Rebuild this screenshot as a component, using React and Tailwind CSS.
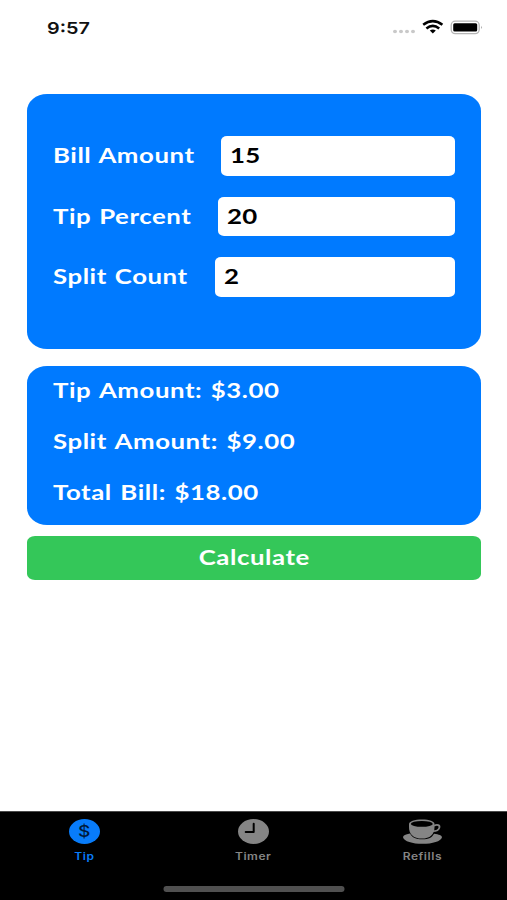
import React, { useState } from 'react';
import { clsx } from 'clsx';

const fields = [
  { key: 'bill', label: 'Bill Amount', labelClass: 'w-[168px]' },
  { key: 'tip', label: 'Tip Percent', labelClass: 'w-[165px]' },
  { key: 'split', label: 'Split Count', labelClass: 'w-[162px]' },
];

function StatusBar() {
  return (
    <header className="flex h-[94px] shrink-0 items-start justify-between pl-[47px] pr-[24px] pt-[17px]">
      <span className="mt-px origin-left scale-x-[1.2] font-['Inter'] text-[16.5px] font-semibold leading-[21px] text-[#111]">
        9:57
      </span>
      <svg width="91" height="20" viewBox="0 0 91 20" className="mt-px">
        <g fill="#c9c9c9">
          <ellipse cx="3" cy="13.5" rx="2" ry="1.7" />
          <ellipse cx="9" cy="13.5" rx="2" ry="1.7" />
          <ellipse cx="15" cy="13.5" rx="2" ry="1.7" />
          <ellipse cx="21" cy="13.5" rx="2" ry="1.7" />
        </g>
        <g fill="none" stroke="#000" strokeWidth="2.6">
          <path d="M31.2 6.8Q40.8 -0.4 50.4 6.8" />
          <path d="M34.4 10.4Q40.8 5.4 47.2 10.4" />
        </g>
        <path d="M37.8 12.6Q40.8 10.2 43.8 12.6L40.8 15.4Z" fill="#000" />
        <rect x="59.2" y="3.2" width="28" height="12.4" rx="4" fill="#fff" stroke="#b5b5b5" strokeWidth="1.3" />
        <rect x="61.2" y="5.2" width="24" height="8.4" rx="1.5" fill="#000" />
        <path d="M89.2 7.7Q91 9.4 89.2 11.1Z" fill="#999" />
      </svg>
    </header>
  );
}

function ResultLine({ label, value }) {
  return (
    <p className="h-[51.4px] origin-left scale-x-[1.2] whitespace-nowrap text-[21.5px] font-bold leading-[26px] tracking-[0.45px] [word-spacing:1.5px]">
      {label}: ${value.toFixed(2)}
    </p>
  );
}

function TipIcon() {
  return (
    <span className="flex h-[25px] w-[31px] items-center justify-center rounded-[50%] bg-[#087cfa]">
      <span className="scale-x-[1.2] font-['Inter'] text-[16px] font-medium leading-[25px] text-[#001a3a]">$</span>
    </span>
  );
}

function TimerIcon() {
  return (
    <svg width="31" height="25" viewBox="0 0 31 25">
      <ellipse cx="15.5" cy="12.5" rx="15.5" ry="12.5" fill="#858585" />
      <path d="M15.7 4.8V13H7.7" fill="none" stroke="#000" strokeWidth="2" strokeLinecap="round" strokeLinejoin="round" />
    </svg>
  );
}

function CupIcon() {
  return (
    <svg width="39" height="25" viewBox="0 0 39 25">
      <g fill="#858585">
        <path d="M7 14.6C2.5 15.3 0 16.6 0 18.2C1 22.3 9.5 24.8 19.5 24.8S38 22.3 39 18.2C39 16.6 36 15.2 31 14.7C29 18.6 26 20.3 19.3 20.3S9.5 18.8 7 14.6Z" />
        <path d="M6 5C6 2.3 11.5 0.5 19 0.5S31.5 2.3 31.5 5V8C31.5 15.5 27 19.6 18.8 19.6S6 15.5 6 8Z" />
      </g>
      <ellipse cx="18.8" cy="4.9" rx="11" ry="2.9" fill="#000" />
      <path d="M31 6.7C34.5 5.1 37 6.2 36.4 8.6C35.8 11 32.5 12.2 29.7 12.2" fill="none" stroke="#858585" strokeWidth="1.8" />
    </svg>
  );
}

const tabs = [
  { name: 'Tip', Icon: TipIcon },
  { name: 'Timer', Icon: TimerIcon },
  { name: 'Refills', Icon: CupIcon },
];

function TabBar() {
  const [active, setActive] = useState('Tip');

  return (
    <footer className="flex h-[89px] shrink-0 flex-col items-center border-t border-[#4a4a4a] bg-black">
      <nav className="grid w-full grid-cols-3 pt-[7px]">
        {tabs.map(({ name, Icon }) => (
          <button
            key={name}
            onClick={() => setActive(name)}
            className={clsx(
              'flex flex-col items-center',
              active === name ? 'text-[#087cfa]' : 'text-[#858585]'
            )}
          >
            <Icon />
            <span className="mt-[5px] scale-x-[1.2] font-['Inter'] text-[10px] font-semibold leading-[14px] tracking-[0.45px]">
              {name}
            </span>
          </button>
        ))}
      </nav>
      <div className="mt-[23px] h-[6px] w-[181px] translate-x-[0.5px] rounded-full bg-[#505050]" />
    </footer>
  );
}

export default function App() {
  const [values, setValues] = useState({ bill: '15', tip: '20', split: '2' });
  const [result, setResult] = useState({ tip: 3, split: 9, total: 18 });

  const calculate = () => {
    const bill = Number(values.bill) || 0;
    const tip = (bill * (Number(values.tip) || 0)) / 100;
    const total = bill + tip;
    setResult({ tip, split: total / (Number(values.split) || 1), total });
  };

  return (
    <div className="flex h-[900px] w-[507px] flex-col overflow-hidden bg-white font-['Lato',sans-serif]">
      <StatusBar />

      <main className="flex flex-1 flex-col pl-[27px] pr-[26px] text-white">
        <section className="flex h-[255px] flex-col gap-[21px] rounded-[20px/17px] bg-[#007aff] px-[26px] pt-[42px]">
          {fields.map(({ key, label, labelClass }) => (
            <label key={key} className="flex h-[39.7px] items-center">
              <span className={clsx('shrink-0 pb-[2px]', labelClass)}>
                <span className="block origin-left scale-x-[1.2] whitespace-nowrap text-[21.5px] font-bold leading-[26px] tracking-[0.45px] [word-spacing:1px]">
                  {label}
                </span>
              </span>
              <span className="h-full min-w-0 flex-1 rounded-[6px/5px] bg-white pl-[9px]">
                <input
                  value={values[key]}
                  onChange={(e) => setValues({ ...values, [key]: e.target.value })}
                  className="h-full w-[180px] origin-left scale-x-[1.2] bg-transparent pb-[2px] text-[21.5px] font-bold tracking-[0.2px] text-black outline-none"
                />
              </span>
            </label>
          ))}
        </section>

        <section className="mt-[16.5px] h-[159px] rounded-[20px/17px] bg-[#007aff] pl-[26px] pt-[11px]">
          <ResultLine label="Tip Amount" value={result.tip} />
          <ResultLine label="Split Amount" value={result.split} />
          <ResultLine label="Total Bill" value={result.total} />
        </section>

        <button onClick={calculate} className="mt-[11px] h-[44px] rounded-[8px/6px] bg-[#34c759]">
          <span className="inline-block scale-x-[1.2] text-[21.5px] font-bold leading-[26px] tracking-[0.45px]">
            Calculate
          </span>
        </button>
      </main>

      <TabBar />
    </div>
  );
}
